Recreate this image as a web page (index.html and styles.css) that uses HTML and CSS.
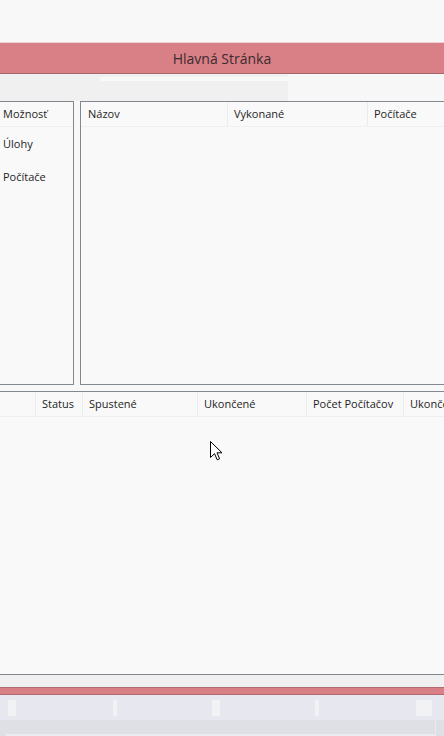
FILE: index.html
```html
<!DOCTYPE html>
<html lang="sk">
<head>
<meta charset="utf-8">
<title>Hlavná Stránka</title>
<link rel="stylesheet" href="styles.css">
</head>
<body>
<div class="app">
  <div class="top-space"></div>
  <div class="title-bar">Hlavná Stránka</div>
  <div class="toolbar">
    <div class="tool-left"><div class="tool-hl"></div></div>
    <div class="tool-right"></div>
  </div>
  <div class="upper">
    <div class="panel panel-left">
      <div class="hdr">
        <div class="col col-opt">Možnosť</div>
      </div>
      <div class="menu">
        <div class="menu-item">Úlohy</div>
        <div class="menu-item">Počítače</div>
      </div>
    </div>
    <div class="panel panel-right">
      <div class="hdr">
        <div class="col c-nazov">Názov</div>
        <div class="col c-vyk">Vykonané</div>
        <div class="col c-poc">Počítače</div>
      </div>
    </div>
  </div>
  <div class="panel panel-bottom">
    <div class="hdr">
      <div class="col b-0"></div>
      <div class="col b-status">Status</div>
      <div class="col b-spust">Spustené</div>
      <div class="col b-ukon">Ukončené</div>
      <div class="col b-pocet">Počet Počítačov</div>
      <div class="col b-ukon2">Ukončené</div>
    </div>
  </div>
  <div class="foot-gap"></div>
  <div class="red-bar"></div>
  <div class="status-strip">
    <span class="tab t1"></span>
    <span class="tab t2"></span>
    <span class="tab t3"></span>
    <span class="tab t4"></span>
    <span class="tab t5"></span>
  </div>
  <div class="bottom-strip"><div class="bottom-inner"></div></div>
  <svg class="cursor" width="13" height="20" viewBox="0 0 13 20">
    <path d="M0.5 0.5 L0.5 16.5 L4.5 12.6 L7.2 18.8 L9.6 17.8 L7 11.8 L12 11.8 Z" fill="#ffffff" stroke="#000000" stroke-width="1" stroke-linejoin="miter"/>
  </svg>
</div>
</body>
</html>
```

FILE: styles.css
```css
* { box-sizing: border-box; }
html, body { margin: 0; padding: 0; }
body {
  width: 444px;
  height: 736px;
  overflow: hidden;
  background: #f8f8f9;
  font-family: "Open Sans", "Noto Sans", sans-serif;
  color: #1e1e1e;
}
.app {
  position: relative;
  width: 444px;
  height: 736px;
  display: flex;
  flex-direction: column;
}
.top-space { height: 42px; flex: none; }
.title-bar {
  height: 32px;
  flex: none;
  background: #d98087;
  border-top: 1px solid #ecd2d4;
  border-bottom: 1px solid #a5666b;
  display: flex;
  align-items: center;
  justify-content: center;
  font-size: 14px;
  color: #3c2a2f;
  padding-top: 1px;
}
.toolbar {
  height: 27px;
  flex: none;
  display: flex;
}
.tool-left {
  width: 288px;
  background: #f0f0f0;
  padding-top: 3px;
  padding-left: 100px;
}
.tool-hl {
  height: 4px;
  background: #f8f8f8;
}
.tool-right { flex: 1; background: #f7f7f7; }
.upper {
  height: 284px;
  flex: none;
  display: flex;
  gap: 6px;
}
.panel {
  background: #f9f9f9;
  border: 1px solid #828790;
  overflow: hidden;
}
.panel-left {
  width: 74px;
  border-left: none;
}
.panel-right {
  flex: 1;
  border-right: none;
}
.hdr {
  height: 25px;
  display: flex;
  border-bottom: 1px solid #efefef;
  white-space: nowrap;
}
.col {
  flex: none;
  font-size: 11px;
  line-height: 24px;
  padding-left: 6px;
  border-right: 1px solid #ececec;
  color: #1e1e1e;
}
.col-opt { width: 73px; padding-left: 3px; border-right: none; }
.c-nazov { width: 147px; padding-left: 7px; }
.c-vyk { width: 140px; }
.c-poc { width: 100px; border-right: none; }
.menu {
  padding-top: 9px;
  display: flex;
  flex-direction: column;
}
.menu-item {
  font-size: 11px;
  padding-left: 3px;
  height: 33px;
  line-height: 16px;
}
.panel-bottom {
  height: 284px;
  flex: none;
  margin-top: 6px;
  border-left: none;
  border-right: none;
}
.b-0 { width: 36px; }
.b-status { width: 47px; }
.b-spust { width: 115px; }
.b-ukon { width: 109px; }
.b-pocet { width: 97px; }
.b-ukon2 { width: 60px; border-right: none; }
.foot-gap { height: 12px; flex: none; background: #f0f0f0; }
.red-bar {
  height: 8px;
  flex: none;
  background: #d98087;
  border-top: 1px solid #b06a70;
  border-bottom: 1px solid #b06a70;
}
.status-strip {
  height: 25px;
  flex: none;
  background: #e6e7ef;
  position: relative;
}
.tab {
  position: absolute;
  top: 5px;
  height: 16px;
  background: #f2f2f5;
}
.t1 { left: 8px; width: 8px; }
.t2 { left: 113px; width: 4px; }
.t3 { left: 212px; width: 8px; }
.t4 { left: 315px; width: 4px; }
.t5 { left: 416px; width: 16px; }
.bottom-strip {
  flex: 1;
  background: #dfe0e6;
  padding: 0 8px 0 6px;
}
.bottom-inner {
  height: 100%;
  border-right: 1px solid #eaeaee;
  border-bottom: 2px solid #ececf0;
}
.cursor {
  position: absolute;
  left: 210px;
  top: 441px;
}
```
